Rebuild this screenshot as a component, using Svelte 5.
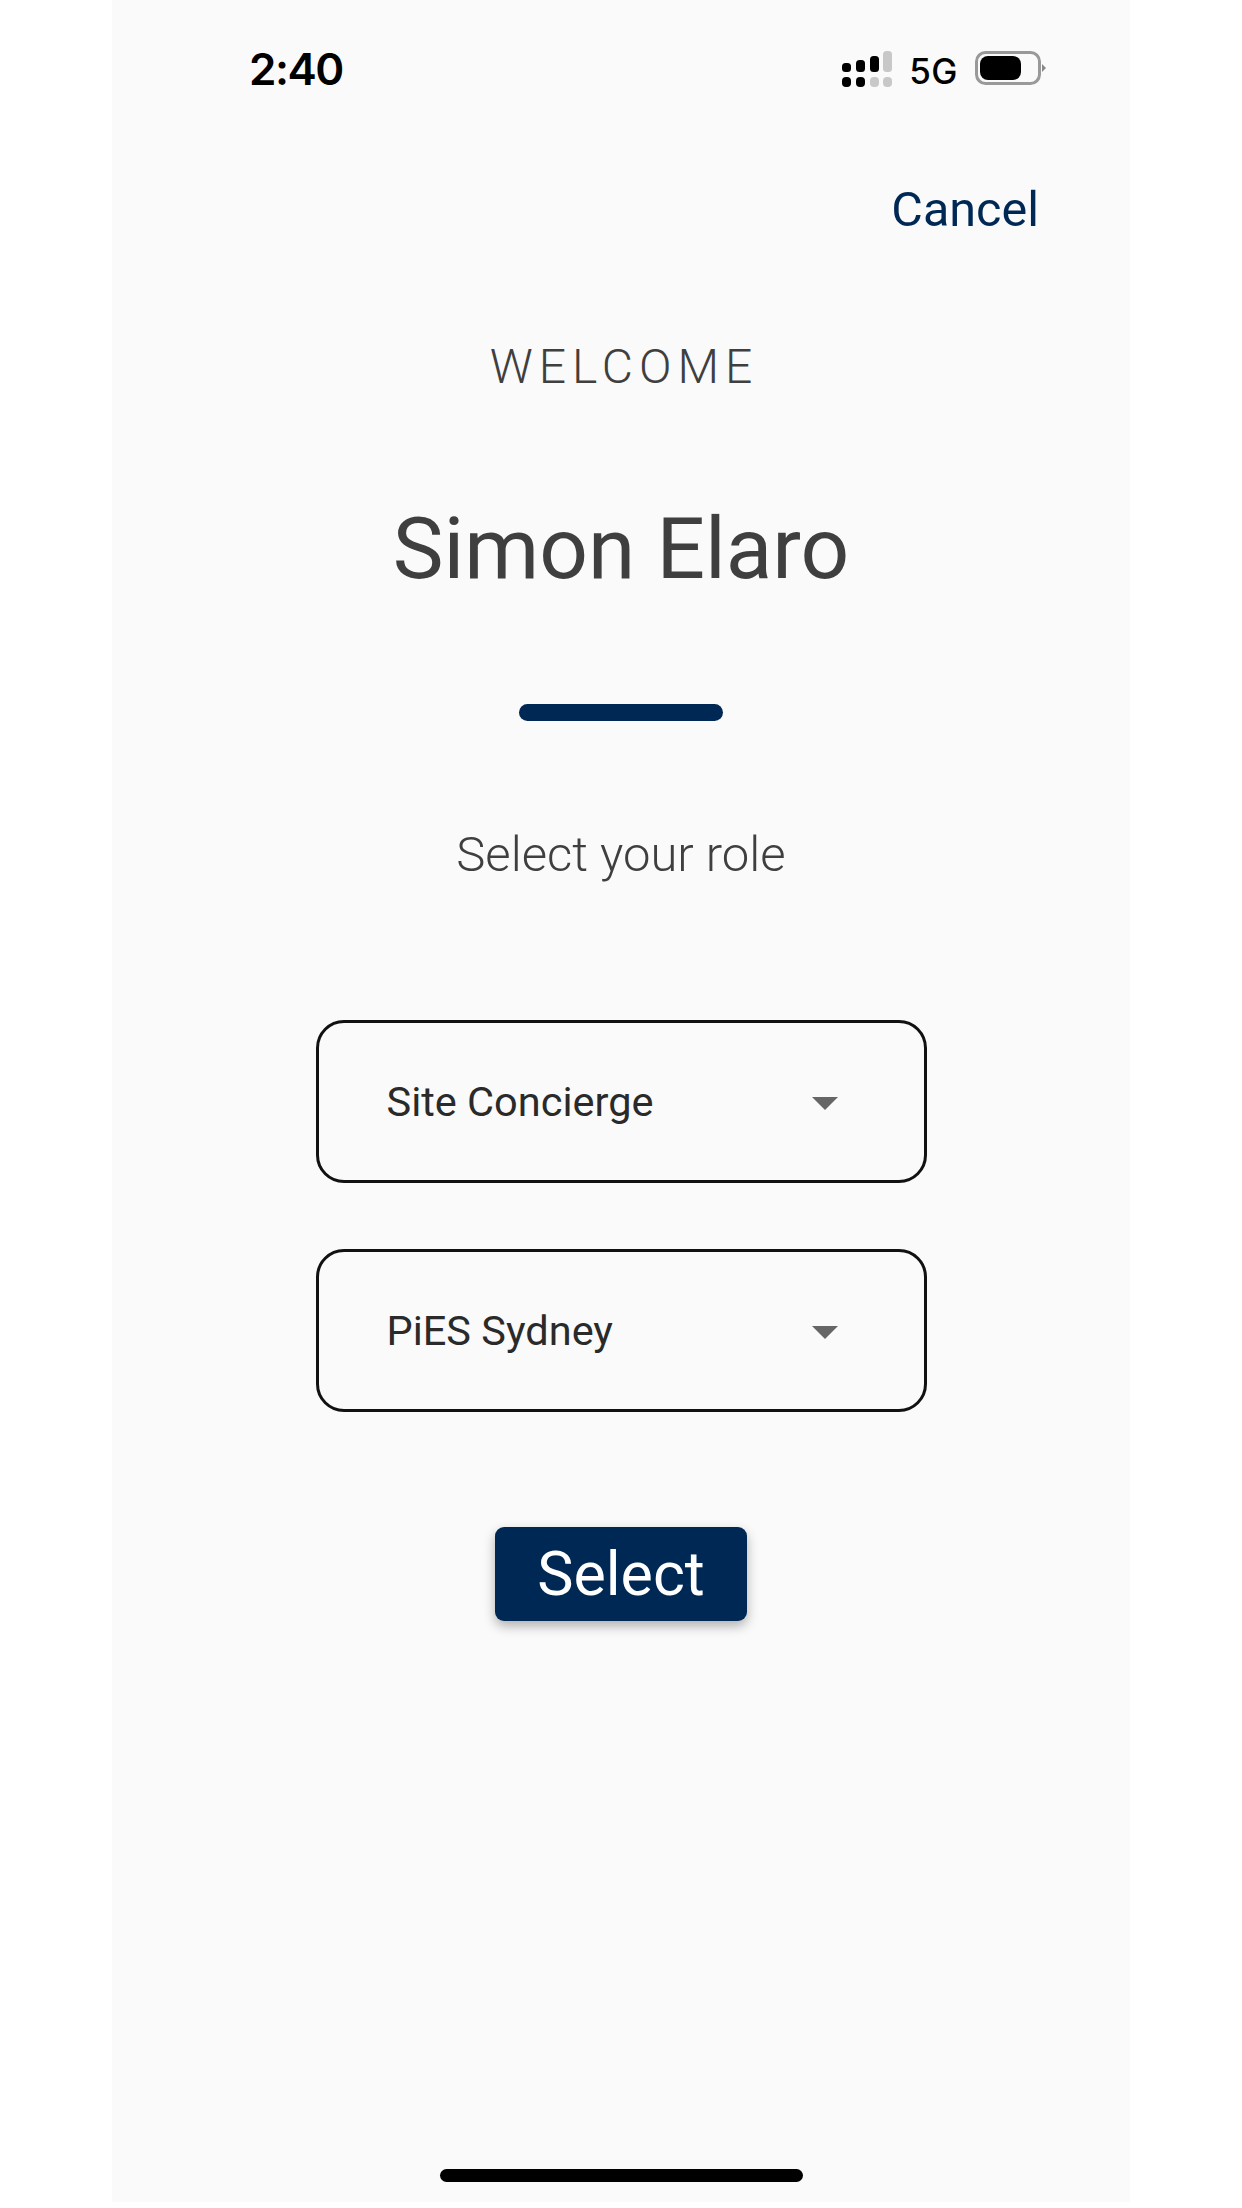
<script>
    let role = "Site Concierge";
    let site = "PiES Sydney";
</script>

<div class="screen">
    <header class="status-bar">
        <span class="time">2:40</span>
        <div class="status-icons">
            <svg class="signal" viewBox="0 0 50 36" width="50" height="36">
                <rect x="0" y="12" width="9" height="9" rx="3.5" fill="#000" />
                <rect x="14" y="9" width="9" height="12" rx="3.5" fill="#000" />
                <rect x="28" y="5" width="9" height="16" rx="3.5" fill="#000" />
                <rect x="41" y="0" width="9" height="21" rx="3.5" fill="#c8c8c8" />
                <rect x="0" y="26" width="9" height="10" rx="4" fill="#000" />
                <rect x="14" y="26" width="9" height="10" rx="4" fill="#000" />
                <rect x="28" y="26" width="9" height="10" rx="4" fill="#c8c8c8" />
                <rect x="41" y="26" width="9" height="10" rx="4" fill="#c8c8c8" />
            </svg>
            <span class="network">5G</span>
            <svg class="battery" viewBox="0 0 71 34" width="71" height="34">
                <rect x="1.5" y="1.5" width="63" height="31" rx="9" fill="none" stroke="#999" stroke-width="3" />
                <rect x="5" y="5" width="41" height="24" rx="8" fill="#000" />
                <path d="M67 13 L71 17 L67 21 Z" fill="#888" />
            </svg>
        </div>
    </header>

    <div class="nav">
        <button class="cancel">Cancel</button>
    </div>

    <main class="content">
        <p class="welcome">WELCOME</p>
        <h1 class="name">Simon Elaro</h1>
        <div class="divider"></div>
        <p class="prompt">Select your role</p>

        <button class="dropdown">
            <span>{role}</span>
            <span class="arrow"></span>
        </button>
        <button class="dropdown second">
            <span>{site}</span>
            <span class="arrow"></span>
        </button>

        <button class="submit">Select</button>
    </main>

    <div class="home-indicator"></div>
</div>

<style>
    :global(body) {
        background: #fff;
    }

    .screen {
        width: 1018px;
        height: 2202px;
        margin-left: 112px;
        background: #fafafa;
        display: flex;
        flex-direction: column;
        font-family: Roboto, "Liberation Sans", sans-serif;
        color: #3f3f3f;
    }

    .status-bar {
        height: 120px;
        padding: 0 84px 0 137px;
        display: flex;
        align-items: flex-start;
        justify-content: space-between;
        box-sizing: border-box;
    }

    .time {
        margin-top: 43px;
        font-family: Inter, "Liberation Sans", sans-serif;
        font-size: 44px;
        line-height: 52px;
        font-weight: 600;
        letter-spacing: -1.5px;
        color: #000;
    }

    .status-icons {
        margin-top: 51px;
        display: flex;
        align-items: flex-start;
    }

    .network {
        margin: 0 17px;
        font-family: Inter, "Liberation Sans", sans-serif;
        font-size: 35px;
        line-height: 40px;
        font-weight: 500;
        letter-spacing: 0.5px;
        color: #000;
    }

    .nav {
        display: flex;
        justify-content: flex-end;
        padding: 60px 91px 0 0;
    }

    .cancel {
        background: none;
        border: none;
        padding: 0;
        font: 400 48.5px/60px Roboto, sans-serif;
        color: #002855;
    }

    .content {
        flex: 1;
        display: flex;
        flex-direction: column;
        align-items: center;
    }

    .welcome {
        margin: 99px 0 0;
        padding-left: 6px;
        font-size: 48px;
        line-height: 56px;
        font-weight: 300;
        letter-spacing: 6px;
    }

    .name {
        margin: 104px 0 0;
        font-size: 85.5px;
        line-height: 100px;
        font-weight: 400;
    }

    .divider {
        width: 204px;
        height: 17px;
        margin-top: 105px;
        border-radius: 9px;
        background: #002855;
    }

    .prompt {
        margin: 106px 0 0;
        font-size: 49px;
        line-height: 56px;
        font-weight: 300;
    }

    .dropdown {
        width: 611px;
        height: 163px;
        margin-top: 137px;
        padding: 0 86px 0 68px;
        display: flex;
        align-items: center;
        justify-content: space-between;
        box-sizing: border-box;
        background: none;
        border: 3px solid #111;
        border-radius: 28px;
        font: 400 41.5px/48px Roboto, sans-serif;
        color: #2a2a2a;
    }

    .dropdown.second {
        margin-top: 66px;
    }

    .arrow {
        width: 0;
        height: 0;
        margin-top: 3px;
        border-left: 13px solid transparent;
        border-right: 13px solid transparent;
        border-top: 13px solid #666;
    }

    .submit {
        width: 252px;
        height: 94px;
        margin-top: 115px;
        padding: 0;
        background: #002855;
        border: none;
        border-radius: 9px;
        box-shadow: 0 5px 12px rgba(0, 0, 0, 0.3);
        font: 400 61px/94px Roboto, sans-serif;
        color: #fff;
    }

    .home-indicator {
        width: 363px;
        height: 13px;
        margin: 0 auto 20px;
        border-radius: 7px;
        background: #000;
    }
</style>
